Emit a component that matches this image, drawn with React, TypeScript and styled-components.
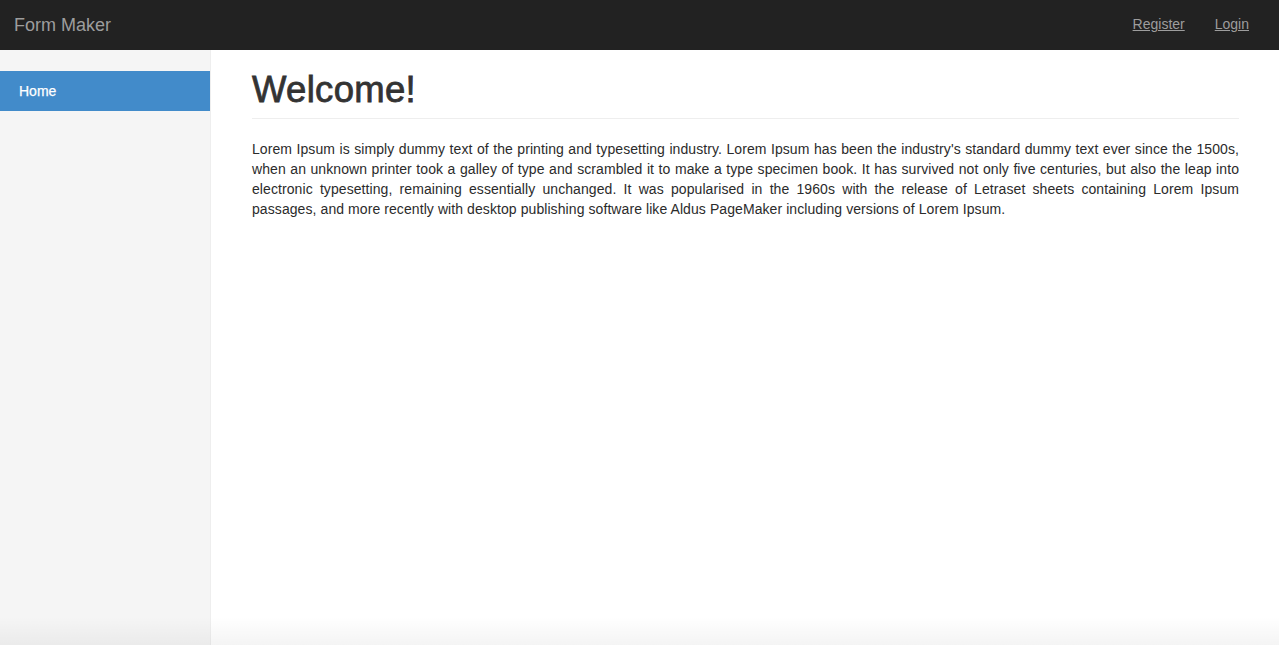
import React from 'react'
import styled, { createGlobalStyle } from 'styled-components'

const GlobalStyle = createGlobalStyle`
  html, body {
    margin: 0;
    padding: 0;
    height: 100%;
  }
  body {
    font-family: 'Liberation Sans', Arial, sans-serif;
    font-size: 14px;
    line-height: 1.42857;
    color: #333;
    background-color: #fff;
  }
  #root {
    height: 100%;
  }
`

const Page = styled.div`
  display: flex;
  flex-direction: column;
  height: 100vh;
  position: relative;

  /* faint shade along the bottom edge of the window */
  &::after {
    content: '';
    position: absolute;
    left: 0;
    right: 0;
    bottom: 0;
    height: 28px;
    pointer-events: none;
    background: linear-gradient(rgba(0, 0, 0, 0), rgba(0, 0, 0, 0.045));
  }
`

const Navbar = styled.nav`
  display: flex;
  justify-content: space-between;
  align-items: center;
  height: 50px;
  flex: none;
  background-color: #222;
  padding: 0 15px 0 14px;
`

const Brand = styled.a`
  color: #9d9d9d;
  font-size: 18px;
  line-height: 20px;
  text-decoration: none;
`

const NavLinks = styled.ul`
  display: flex;
  gap: 30px;
  list-style: none;
  margin: 0 15px 0 0;
  padding: 0;
`

const NavLink = styled.a`
  color: #9d9d9d;
  font-size: 14px;
  text-decoration: underline;
`

const Body = styled.div`
  display: flex;
  flex: 1;
  min-height: 0;
`

const Sidebar = styled.aside`
  width: 211px;
  flex: none;
  box-sizing: border-box;
  background-color: #f5f5f5;
  border-right: 1px solid #eee;
  padding-top: 21px;
`

const SideItem = styled.a<{ active?: boolean }>`
  display: block;
  height: 40px;
  line-height: 40px;
  padding: 0 19px;
  font-size: 14px;
  text-decoration: none;
  -webkit-text-stroke: 0.25px currentColor;
  color: ${props => (props.active ? '#fff' : '#428bca')};
  background-color: ${props => (props.active ? '#428bca' : 'transparent')};
`

const Main = styled.main`
  flex: 1;
  padding: 0 40px 0 41px;
`

const PageHeader = styled.h1`
  margin: 20px 0 20px;
  padding-bottom: 8px;
  border-bottom: 1px solid #eee;
  font-size: 36.5px;
  font-weight: 400;
  line-height: 40px;
  letter-spacing: 0.3px;
  -webkit-text-stroke: 0.8px #333;
  color: #333;
`

const Paragraph = styled.p`
  margin: 0;
  text-align: justify;
  line-height: 20px;
  letter-spacing: 0.08px;
  color: #2b2b2b;
`

export default function App() {
  return (
    <>
      <GlobalStyle />
      <Page>
        <Navbar>
          <Brand href='#'>Form Maker</Brand>
          <NavLinks>
            <li>
              <NavLink href='#'>Register</NavLink>
            </li>
            <li>
              <NavLink href='#'>Login</NavLink>
            </li>
          </NavLinks>
        </Navbar>
        <Body>
          <Sidebar>
            <SideItem href='#' active>
              Home
            </SideItem>
          </Sidebar>
          <Main>
            <PageHeader>Welcome!</PageHeader>
            <Paragraph>
              Lorem Ipsum is simply dummy text of the printing and typesetting
              industry. Lorem Ipsum has been the industry's standard dummy text
              ever since the 1500s, when an unknown printer took a galley of type
              and scrambled it to make a type specimen book. It has survived not
              only five centuries, but also the leap into electronic
              typesetting, remaining essentially unchanged. It was popularised
              in the 1960s with the release of Letraset sheets containing Lorem
              Ipsum passages, and more recently with desktop publishing software
              like Aldus PageMaker including versions of Lorem Ipsum.
            </Paragraph>
          </Main>
        </Body>
      </Page>
    </>
  )
}
